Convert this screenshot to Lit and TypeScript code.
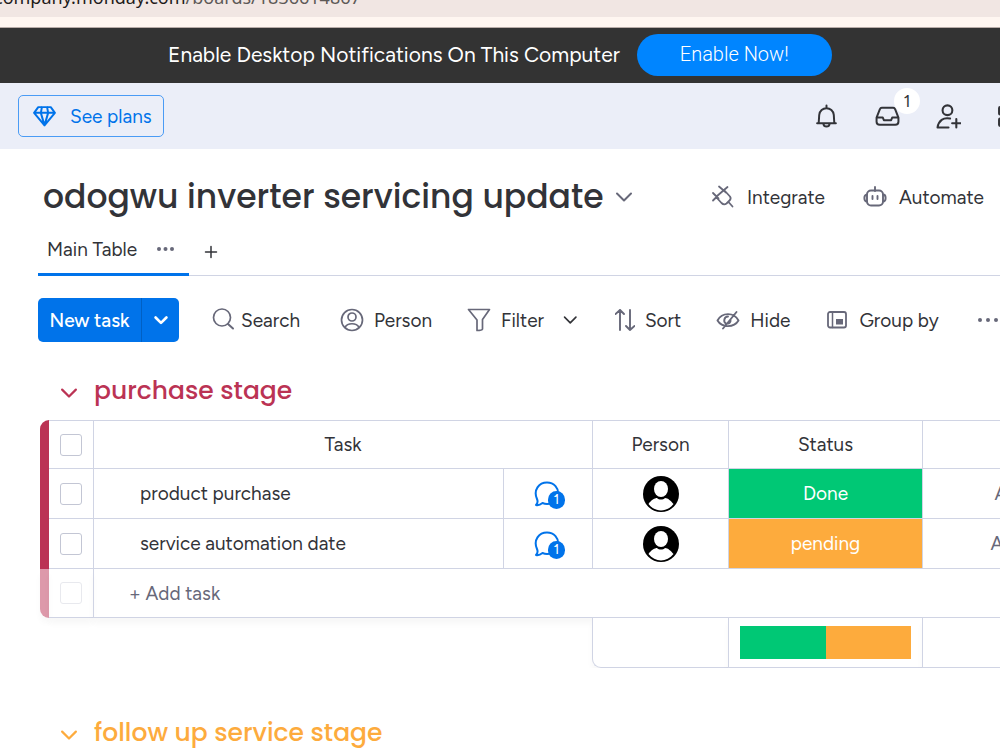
import { LitElement, html, css, svg } from "lit";
import { customElement } from "lit/decorators.js";

const chevron = svg`<path d="M5 8.5 12 15.5 19 8.5" />`;

interface Task {
  name: string;
  status: string;
  tone: string;
  date: string;
}

const tasks: Task[] = [
  { name: "product purchase", status: "Done", tone: "done", date: "Aug 5" },
  { name: "service automation date", status: "pending", tone: "pending", date: "Aug 12" },
];

@customElement("app-root")
export class AppRoot extends LitElement {
  static styles = css`
    :host {
      display: block;
      height: 100vh;
      overflow: hidden;
      background: #fff;
      color: #323338;
      font-family: "Figtree", "Roboto", sans-serif;
      font-size: 19px;
      line-height: 25px;
    }
    * { box-sizing: border-box; }
    svg { fill: none; stroke: currentColor; stroke-width: 2; display: block; flex: none; stroke-linecap: round; stroke-linejoin: round; }
    button, a { font: inherit; color: inherit; background: none; border: 0; padding: 0; margin: 0; text-decoration: none; display: inline-flex; align-items: center; white-space: nowrap; cursor: pointer; }
    .address {
      display: flex;
      align-items: flex-end;
      height: 17px;
      overflow: hidden;
      background: #f1e6e3;
      padding-bottom: 8px;
      margin-left: -6px;
      color: #5d5957;
      font-family: "Noto Sans", sans-serif;
      font-size: 18px;
      line-height: 24px;
      white-space: nowrap;
    }
    .host { color: #1f1b1a; }
    .strip { height: 11px; background: #fff6f1; border-bottom: 1px solid #b9aca8; }
    .notice {
      display: flex;
      align-items: center;
      height: 55px;
      background: #333;
      color: #fff;
      padding: 0 0 2px 168px;
      gap: 17px;
      font-size: 21px;
      white-space: nowrap;
    }
    .enable { justify-content: center; width: 195px; height: 42px; border-radius: 21px; background: #0085ff; color: #fff; font-family: "Roboto", sans-serif; font-size: 20px; font-weight: 300; }
    .top { display: flex; align-items: center; justify-content: space-between; height: 66px; padding: 0 0 0 18px; background: #ebeef8; }
    .plans { height: 42px; padding: 0 11px 0 13px; gap: 13px; border: 1px solid #4a9bf5; border-radius: 5px; color: #0073ea; }
    .tools { display: flex; align-items: center; gap: 36px; margin-right: -22px; }
    .inbox { position: relative; }
    .count { position: absolute; left: 19px; top: -16px; width: 26px; height: 26px; border-radius: 13px; background: #fff; font-size: 17px; line-height: 26px; text-align: center; }
    .head { display: flex; align-items: center; justify-content: space-between; padding: 25px 16px 0 43px; height: 71px; }
    h1 { margin: 0; font-family: "Poppins", "Inter", sans-serif; font-weight: 500; font-size: 33px; line-height: 44px; white-space: nowrap; }
    .title { display: flex; align-items: center; gap: 8px; }
    .actions { display: flex; gap: 38px; }
    .actions button { gap: 12px; }
    .muted { color: #676879; }
    .tabs { display: flex; height: 56px; margin-left: 38px; border-bottom: 1px solid #d0d4e4; }
    .tab { display: flex; align-items: center; height: 56px; width: 151px; padding: 5px 14px 0 9px; justify-content: space-between; border-bottom: 3px solid #0073ea; }
    .add { padding: 8px 14px 0; }
    .bar { display: flex; align-items: center; padding: 22px 0 0 38px; }
    .new { display: flex; flex: none; height: 44px; margin-right: 32px; border-radius: 5px; background: #0073ea; color: #fff; overflow: hidden; font-weight: 500; }
    .new button + button { width: 38px; justify-content: center; border-left: 1px solid #0060c4; }
    .new button:first-child { width: 103px; justify-content: center; }
    .filters { display: flex; flex: none; gap: 35px; }
    .filters button { gap: 10px; }
    .filters .search { gap: 6px; width: 94px; }
    .more { margin-left: 3px; }
    .group { display: flex; align-items: center; gap: 14px; padding-left: 58px; }
    h2 { margin: 0; font-family: "Poppins", "Inter", sans-serif; font-weight: 500; font-size: 25px; line-height: 37px; }
    .red { color: #bb3354; margin-top: 30px; }
    .orange { color: #fdab3d; margin-top: 46px; }
    .board { padding: 11px 0 0 40px; overflow: hidden; }
    table { width: 1076px; table-layout: fixed; border-spacing: 0; }
    .c-bar { width: 9px; } .c-check { width: 44px; } .c-task { width: 410px; } .c-chat { width: 89px; } .c-person { width: 136px; } .c-status { width: 194px; }
    th, td { height: 50px; padding: 0; border-left: 1px solid #d0d4e4; border-bottom: 1px solid #d0d4e4; font-weight: 400; text-align: center; }
    thead th, thead td { height: 49px; border-top: 1px solid #d0d4e4; }
    .edge { border: 0; background: #bb3354; }
    thead .edge { border: 0; border-top-left-radius: 9px; }
    .check { border-left: 0; }
    .edge.light { background: #dd99aa; border-bottom-left-radius: 9px; }
    .last td { height: 49px; box-shadow: 0 6px 6px rgba(0, 0, 0, 0.03); }
    .name { text-align: left; padding-left: 46px; }
    .new-row { text-align: left; padding-left: 35px; color: #676879; }
    .date { color: #676879; }
    .done { background: #00c875; color: #fff; }
    .pending { background: #fdab3d; color: #fff; }
    input { appearance: none; display: block; width: 22px; height: 22px; margin: 0 auto; border: 1px solid #c3c6d4; border-radius: 3px; background: #fff; }
    input:disabled { border-color: #e8e9ee; }
    .chat { position: relative; display: flex; width: 30px; margin: 0 auto; color: #0073ea; }
    .bubble { position: absolute; left: 15px; top: 12px; width: 17px; height: 18px; border-radius: 9px; background: #0073ea; color: #fff; font-size: 14px; line-height: 18px; text-align: center; }
    .chat svg { stroke-width: 2px; }
    .avatar { margin: 0 auto; }
    tfoot td { background: #fff; box-shadow: 0 6px 6px rgba(0, 0, 0, 0.03); }
    tfoot .blank { border: 0; background: none; box-shadow: none; }
    .sum { border-bottom-left-radius: 9px; }
    .battery { display: flex; height: 33px; margin: 0 11px; }
    .battery span { flex: 1; }
  `;

  render() {
    return html`
      <div class="address"><span class="host">company.monday.com</span><span>/boards/1836614867</span></div>
      <div class="strip"></div>
      <div class="notice">
        <span>Enable Desktop Notifications On This Computer</span>
        <button class="enable">Enable Now!</button>
      </div>
      <nav class="top">
        <button class="plans">
          <svg width="25" height="25" viewBox="0 0 24 24"><path d="M6 3H18L22 8.500 12 20.500 2 8.500ZM2 8.500H22M8.500 8.500 12 20.500 15.500 8.500M8.500 8.500 9.500 3M15.500 8.500 14.500 3" stroke-width="1.900" /></svg>
          See plans
        </button>
        <div class="tools">
          <button aria-label="Notifications"><svg width="25" height="25" viewBox="0 0 24 24"><path d="M12 1.500V4M3 18.500H21M4.500 18.500 5 10.500C5.300 6.500 8.500 4 12 4S18.700 6.500 19 10.500L19.500 18.500M9 19C9.500 22.500 14.500 22.500 15 19" stroke-width="1.900" /></svg></button>
          <button class="inbox" aria-label="Inbox"><svg width="25" height="25" viewBox="0 0 24 24"><path d="M6.500 3.500H17.500Q18.800 3.500 19.300 5L22.500 13V17Q22.500 20 19.500 20H4.500Q1.500 20 1.500 17V13L4.700 5Q5.200 3.500 6.500 3.500ZM1.500 13H7.500L8.500 15.500H15.500L16.500 13H22.500" stroke-width="1.900" /></svg><span class="count">1</span></button>
          <button aria-label="Invite members"><svg width="25" height="25" viewBox="0 0 24 24"><circle cx="11" cy="6" r="4.700" /><path d="M13.500 14C7 12.500 2.500 16 1.500 22.500H12M19.500 14.500V22.500M15.500 18.500H23.500" /></svg></button>
          <button aria-label="Apps"><svg width="25" height="25" viewBox="0 0 24 24"><rect x="2" y="3" width="7" height="7" rx="1" /><rect x="2" y="14" width="7" height="7" rx="1" /><rect x="14" y="3" width="7" height="7" rx="1" /></svg></button>
        </div>
      </nav>
      <header class="head">
        <div class="title"><h1>odogwu inverter servicing update</h1><button class="muted" aria-label="Board options"><svg width="24" height="24" viewBox="0 0 24 24">${chevron}</svg></button></div>
        <div class="actions">
          <button><svg class="muted" width="24" height="24" viewBox="0 0 24 24"><path d="M5.500 11.500 13 5 19 11.500Q20.500 13.500 18.500 15.500L15.500 18.500Q13 20.500 10.500 18L5.500 12.500M2 8 7.500 13.500M8 1.500 15 7.500M2 15.500 5.500 12M13 5 16.500 2M17.500 17 21.500 21.500" stroke-width="1.800" /></svg>Integrate</button>
          <button><svg class="muted" width="24" height="24" viewBox="0 0 24 24"><path d="M12 2V6M9.500 11V14M14.500 11V14M4 9.500C0.500 9.500 0.500 16.500 4 16.500M20 9.500C23.500 9.500 23.500 16.500 20 16.500" stroke-width="1.900" /><rect x="4" y="5.500" width="16" height="15" rx="4" stroke-width="1.900" /></svg>Automate</button>
        </div>
      </header>
      <div class="tabs">
        <div class="tab"><a href="#main">Main Table</a><button class="muted" aria-label="View options"><svg width="19" height="6" viewBox="0 0 19 6"><g fill="currentColor" stroke="none"><circle cx="3" cy="3" r="2" /><circle cx="9.500" cy="3" r="2" /><circle cx="16" cy="3" r="2" /></g></svg></button></div>
        <button class="add" aria-label="Add view"><svg width="16" height="16" viewBox="0 0 16 16"><path d="M8 2.500V13.500M2.500 8H13.500" stroke-width="1.500" /></svg></button>
      </div>
      <div class="bar">
        <div class="new"><button>New task</button><button aria-label="More ways to add"><svg width="20" height="20" viewBox="0 0 24 24"><path d="M5.500 9 12 15.500 18.500 9" stroke-width="3.200" /></svg></button></div>
        <div class="filters">
          <button class="search"><svg class="muted" width="24" height="24" viewBox="0 0 24 24"><circle cx="11" cy="9.500" r="8.500" stroke-width="1.700" /><path d="M17 16 22 20.500" /></svg>Search</button>
          <button><svg class="muted" width="24" height="24" viewBox="0 0 24 24"><circle cx="12" cy="12" r="10.500" stroke-width="1.700" /><circle cx="12" cy="9" r="4" stroke-width="1.700" /><path d="M5 19.500C7.500 14.500 16.500 14.500 19 19.500" stroke-width="1.700" /></svg>Person</button>
          <button><svg class="muted" width="24" height="24" viewBox="0 0 24 24"><path d="M1.500 1.500H22.500L15.500 11.500V21Q15 22.500 10 22.500V12Z" stroke-width="1.700" /></svg>Filter<svg width="26" height="20" viewBox="-8 0 32 24">${chevron}</svg></button>
          <button><svg class="muted" width="20" height="24" viewBox="2 0 20 24"><path d="M7 22V2M2.500 6 7 2 11 6M17 2V22M13 18 17 22 21.500 18" stroke-width="1.900" /></svg>Sort</button>
          <button><svg class="muted" width="24" height="24" viewBox="0 0 24 24"><path d="M1.500 12.500C6 4 18 4 22.500 12.500 18 20 6 20 1.500 12.500ZM7 20.500 20.500 4M12 8.500C8 8.500 7 14 10 15.500M14.500 12C15 14 13 15.500 12 15.500" stroke-width="1.900" /></svg>Hide</button>
          <button><svg class="muted" width="24" height="24" viewBox="0 0 24 24"><rect x="3" y="4" width="18" height="15.500" rx="2" stroke-width="1.800" /><path d="M7.500 4V19.500" stroke-width="1.500" /><rect x="11" y="11" width="7" height="5.500" fill="currentColor" stroke="none" /></svg>Group by</button>
          <button class="muted more" aria-label="More"><svg width="22" height="6" viewBox="0 0 22 6"><g fill="currentColor" stroke="none"><circle cx="3" cy="3" r="2" /><circle cx="11" cy="3" r="2" /><circle cx="19" cy="3" r="2" /></g></svg></button>
        </div>
      </div>
      <section>
        <div class="group red"><svg width="22" height="22" viewBox="0 0 24 24"><path d="M4.500 10.500 12 18 19.500 10.500" stroke-width="2.400" /></svg><h2>purchase stage</h2></div>
        <div class="board">
          <table>
            <colgroup><col class="c-bar" /><col class="c-check" /><col class="c-task" /><col class="c-chat" /><col class="c-person" /><col class="c-status" /><col /></colgroup>
            <thead><tr><td class="edge"></td><td class="check"><input type="checkbox" aria-label="Select all" /></td><th colspan="2">Task</th><th>Person</th><th>Status</th><th>Date</th></tr></thead>
            <tbody>
              ${tasks.map((t) => html`<tr>
                <td class="edge"></td>
                <td class="check"><input type="checkbox" aria-label=${t.name} /></td>
                <td class="name">${t.name}</td>
                <td><button class="chat" aria-label="Updates"><svg width="30" height="30" viewBox="0 0 30 30"><path d="M3 26Q5.500 23.500 4 20C0 11 6 3.500 14 3.500 21 3.500 26 9 25 16 23.500 23 16 27 9.500 24 7 26 5 26.500 3 26Z" /></svg><span class="bubble">1</span></button></td>
                <td><svg class="avatar" width="38" height="38" viewBox="0 0 38 38"><circle cx="19" cy="19" r="18" fill="#000" stroke="none" /><ellipse cx="19" cy="14" rx="7" ry="8" fill="#fff" stroke="none" /><path d="M6.500 29C9 25 13 23 15 23 17 25 21 25 23 23 26 23 29 26 31.500 29 25 37.500 13 37.500 6.500 29Z" fill="#fff" stroke="none" /></svg></td>
                <td class=${t.tone}>${t.status}</td>
                <td class="date">${t.date}</td>
              </tr>`)}
              <tr class="last"><td class="edge light"></td><td class="check"><input type="checkbox" aria-label="New task" disabled /></td><td class="new-row" colspan="5">+ Add task</td></tr>
            </tbody>
            <tfoot><tr><td class="blank" colspan="4"></td><td class="sum"></td><td><div class="battery"><span class="done"></span><span class="pending"></span></div></td><td></td></tr></tfoot>
          </table>
        </div>
      </section>
      <div class="group orange"><svg width="22" height="22" viewBox="0 0 24 24"><path d="M4.500 10.500 12 18 19.500 10.500" stroke-width="2.400" /></svg><h2>follow up service stage</h2></div>
    `;
  }
}
